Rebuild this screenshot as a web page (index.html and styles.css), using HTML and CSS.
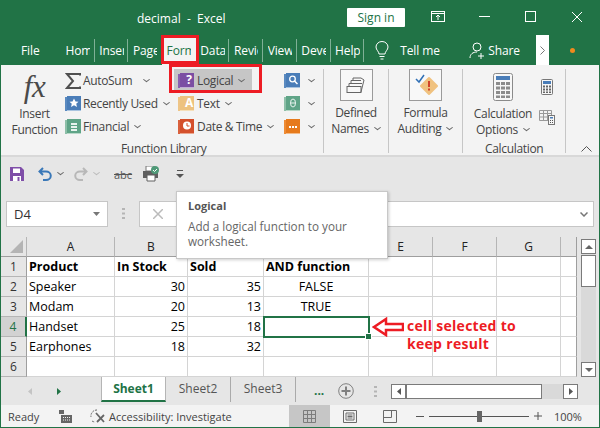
FILE: index.html
```html
<!DOCTYPE html>
<html lang="en">
<head>
<meta charset="utf-8">
<title>decimal - Excel</title>
<link rel="stylesheet" href="styles.css">
</head>
<body>
<div class="app">
  <header class="titlebar">
    <div class="doc-title">decimal&nbsp; -&nbsp; Excel</div>
    <button class="signin">Sign in</button>
    <svg class="win w-display" width="14" height="11" viewBox="0 0 14 11" fill="none" stroke="#fff"><rect x="0.5" y="0.5" width="13" height="10"/><path d="M0 2.5H14M7 9V4M5 6l2-2 2 2"/></svg>
    <svg class="win w-min" width="11" height="11" viewBox="0 0 11 11" stroke="#fff"><path d="M0 5.5H11"/></svg>
    <svg class="win w-max" width="11" height="11" viewBox="0 0 11 11" fill="none" stroke="#fff"><rect x="0.5" y="0.5" width="10" height="10"/></svg>
    <svg class="win w-close" width="12" height="12" viewBox="0 0 12 12" stroke="#fff"><path d="M1 1L11 11M11 1L1 11"/></svg>
  </header>
  <nav class="tabs">
    <span class="file-tab">File</span>
    <span class="tab"><span class="tab-t">Hom</span></span>
    <span class="tab"><span class="tab-t">Inser</span></span>
    <span class="tab"><span class="tab-t">Page</span></span>
    <span class="tab active"><span class="tab-t">Form</span></span>
    <span class="tab"><span class="tab-t">Data</span></span>
    <span class="tab"><span class="tab-t">Revie</span></span>
    <span class="tab"><span class="tab-t">View</span></span>
    <span class="tab"><span class="tab-t">Deve</span></span>
    <span class="tab"><span class="tab-t">Help</span></span>
    <svg class="bulb" width="14" height="19" viewBox="0 0 14 19" fill="none" stroke="#fff"><path d="M4 13c0-2.500-3-4-3-7a6 5.500 0 0 1 12 0c0 3-3 4.500-3 7zM4.500 15.500h5M5.500 18h3"/></svg>
    <span class="tell">Tell me</span>
    <svg class="person" width="16" height="17" viewBox="0 0 16 17" fill="none" stroke="#fff"><circle cx="8" cy="5" r="4"/><path d="M1 16c0-4 3-6 7-6M12 11v6M9 14h6"/></svg>
    <span class="share">Share</span>
    <span class="more">
      <svg width="5" height="9" viewBox="0 0 5 9" fill="none" stroke="#777"><path d="M0.500 0.500l4 4-4 4"/></svg>
    </span>
    <span class="dot"></span>
  </nav>
  <section class="ribbon">
    <div class="group g-lib">
      <div class="group-body lib-body">
        <div class="big-btn fx-btn">
          <span class="fx">fx</span>
          <span class="big-label">Insert<br>Function</span>
        </div>
        <div class="col col-1">
          <div class="rb"><svg class="ic" width="16" height="16" viewBox="0 0 16 16" fill="none" stroke="#505050" stroke-width="2"><path d="M15 2.500V1H2l6 7-6 7h13v-1.500"/></svg><span>AutoSum</span><i class="car car-wide"></i></div>
          <div class="rb"><svg class="ic" width="16" height="16" viewBox="0 0 16 16"><path d="M0 1h2v14H0z" fill="#5a8ac0"/><path d="M2 0h14v14H2z" fill="#4a7db8"/><path d="M2 14h14v1H2z" fill="#a9c4e0"/><path d="M9 2.500l1.500 3 3 .3-2.300 2 .8 3.200L9 9.300 6 11l.8-3.200-2.300-2 3-.3z" fill="#fff"/></svg><span>Recently Used</span><i class="car"></i></div>
          <div class="rb"><svg class="ic" width="16" height="16" viewBox="0 0 16 16"><path d="M0 1h2v14H0z" fill="#8dbfa8"/><path d="M2 0h14v14H2z" fill="#5fa487"/><path d="M2 14h14v1H2z" fill="#b8d8c8"/><path d="M6 4h6v2H6zM6 7h6v2H6zM6 10h6v2H6z" fill="#e8f3ee"/></svg><span>Financial</span><i class="car"></i></div>
        </div>
        <div class="col col-2">
          <div class="rb hot"><svg class="ic" width="16" height="16" viewBox="0 0 16 16"><path d="M0 1h2v14H0z" fill="#8a5fb0"/><path d="M2 0h14v14H2z" fill="#7b4ea3"/><path d="M2 14h14v1H2z" fill="#c3add6"/></svg><span class="q">?</span><span>Logical</span><i class="car"></i></div>
          <div class="rb"><svg class="ic" width="16" height="16" viewBox="0 0 16 16"><path d="M0 1h2v14H0z" fill="#eec587"/><path d="M2 0h14v14H2z" fill="#edc27f"/><path d="M2 14h14v1H2z" fill="#f5dfb9"/></svg><span class="a">A</span><span>Text</span><i class="car"></i></div>
          <div class="rb"><svg class="ic" width="16" height="16" viewBox="0 0 16 16"><path d="M0 1h2v14H0z" fill="#d9603c"/><path d="M2 0h14v14H2z" fill="#d4502c"/><path d="M2 14h14v1H2z" fill="#eba78f"/><circle cx="9" cy="6.500" r="4" fill="#fff"/><path d="M9 4v3h2.500" fill="none" stroke="#d4502c"/></svg><span>Date &amp; Time</span><i class="car"></i></div>
        </div>
        <div class="col col-3">
          <div class="rb"><svg class="ic" width="16" height="16" viewBox="0 0 16 16"><path d="M0 1h2v14H0z" fill="#5a8ac0"/><path d="M2 0h14v14H2z" fill="#4a7db8"/><path d="M2 14h14v1H2z" fill="#a9c4e0"/><circle cx="8.500" cy="6" r="2.800" fill="none" stroke="#fff" stroke-width="1.300"/><path d="M10.500 8l3 3" stroke="#fff" stroke-width="1.500"/></svg><i class="car"></i></div>
          <div class="rb"><svg class="ic" width="16" height="16" viewBox="0 0 16 16"><path d="M0 1h2v14H0z" fill="#8dbfa8"/><path d="M2 0h14v14H2z" fill="#5fa487"/><path d="M2 14h14v1H2z" fill="#b8d8c8"/><ellipse cx="9" cy="7" rx="2.500" ry="4" fill="none" stroke="#e8f3ee"/><path d="M6.500 7h5" stroke="#e8f3ee"/></svg><i class="car"></i></div>
          <div class="rb"><svg class="ic" width="16" height="16" viewBox="0 0 16 16"><path d="M0 1h2v14H0z" fill="#ee8b34"/><path d="M2 0h14v14H2z" fill="#e67a1c"/><path d="M2 14h14v1H2z" fill="#f3bb89"/><path d="M5 7h2v2H5zM8 7h2v2H8zM11 7h2v2h-2z" fill="#fff"/></svg><i class="car"></i></div>
        </div>
      </div>
      <div class="group-label lib-label">Function Library</div>
    </div>
    <div class="group g-names">
      <div class="icon-box"><svg width="20" height="20" viewBox="0 0 20 20" fill="none" stroke="#666"><rect x="1" y="11.500" width="14" height="6"/><path d="M3 11V8.500h13M5 8V5.500h10M7 5V3h8l3 2-3 12"/></svg></div>
      <div class="big-label">Defined<br>Names<i class="car"></i></div>
    </div>
    <div class="group g-audit">
      <div class="icon-box"><svg width="24" height="22" viewBox="0 0 24 22"><path d="M2 5l3 3 5-7" fill="none" stroke="#2f6fb5" stroke-width="1.500"/><path d="M15 4l8 8-8 8-8-8z" fill="#f0c27f" stroke="#f0c27f" stroke-linejoin="round" stroke-width="2"/><path d="M14 7h2v6h-2zM14 14.500h2v2h-2z" fill="#d1432a"/></svg></div>
      <div class="big-label">Formula<br>Auditing<i class="car"></i></div>
    </div>
    <div class="group g-calc">
      <div class="calc-body">
        <div class="calc-big">
          <svg width="20" height="28" viewBox="0 0 20 28"><rect x="0.500" y="0.500" width="19" height="27" rx="2" fill="#f7f7f7" stroke="#8a8a8a"/><rect x="3" y="3" width="14" height="4" fill="#4a7db8"/><path d="M3 9h4v3H3zM8 9h4v3H8zM13 9h4v3h-4zM3 13.500h4v3H3zM8 13.500h4v3H8zM13 13.500h4v3h-4zM3 18h4v3H3zM8 18h4v3H8zM13 18h4v3h-4zM3 22.500h4v2.500H3zM8 22.500h4v2.500H8zM13 22.500h4v2.500h-4z" fill="#8c8c8c"/></svg>
          <div class="big-label">Calculation<br>Options<i class="car"></i></div>
        </div>
        <div class="calc-small">
          <svg width="12" height="16" viewBox="0 0 12 16"><rect x="0.500" y="0.500" width="11" height="15" rx="1" fill="#f7f7f7" stroke="#777"/><rect x="2" y="2" width="8" height="3" fill="#4a7db8"/><path d="M2 6.500h2v2H2zM5 6.500h2v2H5zM8 6.500h2v2H8zM2 9.500h2v2H2zM5 9.500h2v2H5zM8 9.500h2v2H8zM2 12.500h2v1.500H2zM5 12.500h2v1.500H5zM8 12.500h2v1.500H8z" fill="#666"/></svg>
          <svg width="16" height="15" viewBox="0 0 16 15"><path d="M0.500 0.500h12v10h-12zM4.500 0.500v10M8.500 0.500v10M0.500 3.500h12M0.500 7h12" fill="none" stroke="#999"/><rect x="9.500" y="5.500" width="6" height="9" fill="#f7f7f7" stroke="#777"/><rect x="11" y="7" width="3" height="1.500" fill="#4a7db8"/><path d="M11 10h1v1h-1zM13 10h1v1h-1zM11 12h1v1h-1zM13 12h1v1h-1z" fill="#555"/></svg>
        </div>
      </div>
      <div class="group-label calc-label">Calculation</div>
    </div>
    <div class="collapse">
      <svg width="11" height="6" viewBox="0 0 11 6" fill="none" stroke="#555"><path d="M0.500 5.500l5-5 5 5"/></svg>
    </div>
  </section>
  <section class="qat">
    <svg class="q-save" width="14" height="14" viewBox="0 0 14 14"><path d="M0 0h11l3 3v11H0z" fill="#7f4ea8"/><path d="M3 1.500h7V6H3z" fill="#fff"/><path d="M3 9h8v5H3z" fill="#fff"/><path d="M7.500 10h2v4h-2z" fill="#7f4ea8"/></svg>
    <svg class="q-undo" width="14" height="14" viewBox="0 0 14 14" fill="none" stroke="#3a78b8" stroke-width="2"><path d="M5 1L1.500 4.500 5 8M2 4.500h6a4.500 4 0 0 1 0 8.500H5"/></svg>
    <i class="car q-car1"></i>
    <svg class="q-redo" width="14" height="14" viewBox="0 0 14 14" fill="none" stroke="#b8b8b8" stroke-width="2"><path d="M9 1l3.500 3.500L9 8M12 4.500H6a4.500 4 0 0 0 0 8.500h3"/></svg>
    <i class="car car-off q-car2"></i>
    <span class="abc">abc</span>
    <svg class="q-print" width="17" height="16" viewBox="0 0 17 16"><rect x="3" y="0" width="8" height="5" fill="#fff" stroke="#777"/><path d="M0 5h15v7H0z" fill="#606060"/><path d="M4 9h8v6H4z" fill="#fff" stroke="#606060"/><circle cx="12" cy="4" r="4" fill="#4f9a78"/><path d="M10 4l1.500 1.500L14 3" fill="none" stroke="#fff"/></svg>
    <svg class="q-custom" width="8" height="9" viewBox="0 0 8 9" fill="#555"><path d="M1 0h6v1H1zM0 4h8L4 8z"/></svg>
  </section>
  <section class="fbar">
    <div class="namebox"><span>D4</span><svg width="7" height="4" viewBox="0 0 7 4" fill="#777"><path d="M0 0h7L3.500 4z"/></svg></div>
    <svg class="grip" width="3" height="11" viewBox="0 0 3 11" fill="#b5b5b5"><path d="M0 0h3v2H0zM0 4.500h3v2H0zM0 9h3v2H0z"/></svg>
    <div class="finput">
      <svg width="10" height="10" viewBox="0 0 10 10" stroke="#bbb" stroke-width="1.500"><path d="M0 0L10 10M10 0L0 10"/></svg>
      <svg class="f-chev" width="8" height="5" viewBox="0 0 8 5" fill="none" stroke="#777" stroke-width="1.500"><path d="M0.500 0.500L4 4l3.500-3.500"/></svg>
    </div>
  </section>
  <section class="sheet-area">
    <div class="grid">
      <div class="ch corner"><svg width="13" height="13" viewBox="0 0 13 13" fill="#b4b4b4"><path d="M13 0v13H0z"/></svg></div>
      <div class="ch">A</div><div class="ch">B</div><div class="ch">C</div><div class="ch">D</div><div class="ch">E</div><div class="ch">F</div><div class="ch">G</div><div class="ch ch-end"></div>

      <div class="rh">1</div><div class="c b">Product</div><div class="c b">In Stock</div><div class="c b">Sold</div><div class="c b">AND function</div><div class="c"></div><div class="c"></div><div class="c"></div><div class="c"></div>
      <div class="rh">2</div><div class="c">Speaker</div><div class="c n">30</div><div class="c n">35</div><div class="c m">FALSE</div><div class="c"></div><div class="c"></div><div class="c"></div><div class="c"></div>
      <div class="rh">3</div><div class="c">Modam</div><div class="c n">20</div><div class="c n">13</div><div class="c m">TRUE</div><div class="c"></div><div class="c"></div><div class="c"></div><div class="c"></div>
      <div class="rh sel">4</div><div class="c">Handset</div><div class="c n">25</div><div class="c n">18</div><div class="c cur"><span class="handle"></span></div><div class="c"></div><div class="c"></div><div class="c"></div><div class="c"></div>
      <div class="rh">5</div><div class="c">Earphones</div><div class="c n">18</div><div class="c n">32</div><div class="c"></div><div class="c"></div><div class="c"></div><div class="c"></div><div class="c"></div>
      <div class="rh">6</div><div class="c"></div><div class="c"></div><div class="c"></div><div class="c"></div><div class="c"></div><div class="c"></div><div class="c"></div><div class="c"></div>
    </div>
    <div class="vscroll">
      <div class="sb-btn"><svg width="8" height="4" viewBox="0 0 8 4" fill="#666"><path d="M4 0l4 4H0z"/></svg></div>
      <div class="sb-thumb"></div>
      <div class="sb-btn sb-down"><svg width="8" height="4" viewBox="0 0 8 4" fill="#666"><path d="M0 0h8L4 4z"/></svg></div>
    </div>
  </section>
  <section class="sheetbar">
    <svg class="nav-l" width="4" height="7" viewBox="0 0 4 7" fill="#c4c4c4"><path d="M4 0v7L0 3.500z"/></svg>
    <svg class="nav-r" width="4" height="7" viewBox="0 0 4 7" fill="#217346"><path d="M0 0v7l4-3.500z"/></svg>
    <div class="stab on">Sheet1</div>
    <div class="stab">Sheet2</div>
    <div class="stab">Sheet3</div>
    <span class="ell">...</span>
    <svg class="plus" width="16" height="16" viewBox="0 0 16 16" fill="none" stroke="#808080"><circle cx="8" cy="8" r="7.300"/><path d="M8 3.500v9M3.500 8h9" stroke-width="2"/></svg>
    <svg class="grip grip2" width="3" height="11" viewBox="0 0 3 11" fill="#b5b5b5"><path d="M0 0h3v2H0zM0 4.500h3v2H0zM0 9h3v2H0z"/></svg>
    <div class="hscroll">
      <div class="hb"><svg width="4" height="7" viewBox="0 0 4 7" fill="#555"><path d="M4 0v7L0 3.500z"/></svg></div>
      <div class="hthumb"></div>
      <div class="hb"><svg width="4" height="7" viewBox="0 0 4 7" fill="#555"><path d="M0 0v7l4-3.500z"/></svg></div>
    </div>
  </section>
  <footer class="status">
    <span class="ready">Ready</span>
    <svg class="st-macro" width="13" height="13" viewBox="0 0 13 13" fill="#666"><path d="M0 0h5v4H0zM2 5h11v8H2z"/><path d="M4 7h1v1H4zM6 7h1v1H6zM8 7h1v1H8zM10 7h1v1h-1zM4 9.500h1v1H4zM6 9.500h1v1H6zM8 9.500h1v1H8zM10 9.500h1v1h-1z" fill="#f3f3f3"/></svg>
    <svg class="st-acc" width="17" height="15" viewBox="0 0 17 15" fill="none" stroke="#666"><path d="M8 1a6 6 0 0 0-6 7M3 12a6 6 0 0 0 3 1" stroke-dasharray="2 1"/><path d="M7 4l8 9M15 6l-7 7" stroke-width="1.800"/></svg>
    <span class="acc">Accessibility: Investigate</span>
    <div class="view-on"><svg width="13" height="13" viewBox="0 0 13 13" fill="none" stroke="#7c7c7c"><path d="M.5.500h12v12H.5zM4.500.500v12M8.500.500v12M.5 4.500h12M.5 8.500h12"/></svg></div>
    <svg class="v-layout" width="14" height="13" viewBox="0 0 14 13" fill="none" stroke="#6a6a6a"><path d="M.5.500h13v12H.5zM3 3h8v7H3zM4.500 5h5M4.500 6.500h5M4.500 8h5"/></svg>
    <svg class="v-break" width="14" height="13" viewBox="0 0 14 13" fill="none" stroke="#6a6a6a"><path d="M.5.500h13v12H.5zM.5 7.500h8V.5"/></svg>
    <svg class="z-minus" width="8" height="1" viewBox="0 0 8 1" fill="#555"><path d="M0 0h8v1H0z"/></svg>
    <div class="slider"><span class="knob"></span></div>
    <svg class="z-plus" width="8" height="8" viewBox="0 0 8 8" fill="#555"><path d="M0 3.500h8v1H0zM3.500 0h1v8h-1z"/></svg>
    <span class="pct">100%</span>
  </footer>

  <div class="mark mark-tab"></div>
  <div class="mark mark-logical"></div>
  <aside class="tooltip">
    <div class="tip-title">Logical</div>
    <div class="tip-text">Add a logical function to your worksheet.</div>
  </aside>
  <div class="note">
    <svg width="32" height="20" viewBox="0 0 32 20" fill="#fff" stroke="#ed1c24" stroke-width="2.500"><path d="M2 10l12-8v5h17v6H14v5z"/></svg>
    <div class="note-text">cell selected to<br>keep result</div>
  </div>
</div>
</body>
</html>
```
FILE: styles.css
```css
* { box-sizing: border-box; }
html, body { margin: 0; padding: 0; }
body { font-family: "Open Sans", "Noto Sans", sans-serif; color: #444; }
.app { position: relative; width: 600px; height: 428px; overflow: hidden; background: #e6e6e6; border: 1px solid #217346; border-width: 0 1px 1px 1px; display: flex; flex-direction: column; }
svg { display: block; flex: none; }
i.car { display: inline-block; width: 5px; height: 5px; border: solid #666; border-width: 0 1px 1px 0; transform: scale(1, .75) rotate(45deg); margin: 0 1px 3px 6px; flex: none; }
i.car-off { border-color: #bbb; }

/* title */
.titlebar { height: 36px; background: #217346; display: flex; align-items: center; flex: none; color: #fff; }
.doc-title { width: 346px; padding-left: 136px; font-size: 12px; }
.signin { width: 58px; height: 19px; margin-top: -2px; background: #fff; color: #217346; border: 0; border-radius: 1px; font: 12px "Open Sans", sans-serif; padding: 0; }
.win { margin-top: -3px; }
.w-display { margin-left: 26px; }
.w-min { margin-left: 34px; }
.w-max { margin-left: 35px; }
.w-close { margin-left: 35px; }

/* tabs */
.tabs { height: 29px; background: #217346; display: flex; align-items: center; flex: none; color: #fff; font-size: 12px; letter-spacing: -.1px; }
.file-tab { width: 60px; padding-left: 20px; }
.tab { width: 33.700px; height: 23px; line-height: 23px; padding-left: 4.500px; white-space: nowrap; border-right: 1px solid #7fb096; }
.tab-t { display: block; width: 24.500px; overflow: hidden; }
.tab.active { height: 29px; line-height: 29px; background: #f3f3f3; color: #217346; border-right: 0; }
.bulb { margin-left: 11px; }
.tell { margin-left: 11px; width: 38px; white-space: nowrap; }
.person { margin-left: 31px; }
.share { margin-left: 3px; width: 30px; }
.more { margin-left: 18px; width: 13px; height: 30px; background: #fff; display: flex; align-items: center; justify-content: center; align-self: flex-end; }
.dot { width: 5px; height: 5px; border-radius: 50%; background: #f08a1d; margin-left: 21px; margin-top: -1px; }

/* ribbon */
.ribbon { height: 92px; flex: none; background: #f3f3f3; border-bottom: 2px solid #d8d8d8; display: flex; font-size: 12px; color: #444; letter-spacing: -.33px; }
.group { position: relative; border-right: 1px solid #c6c6c6; height: 84px; margin-top: 4px; flex: none; display: flex; flex-direction: column; align-items: center; }
.g-lib { width: 323px; }
.g-names { width: 65px; }
.g-audit { width: 74px; }
.g-calc { width: 103px; }
.group-body { flex: 1; }
.lib-body { display: flex; width: 100%; align-items: flex-start; }
.big-btn { display: flex; flex-direction: column; align-items: center; }
.fx-btn { width: 67px; }
.fx { font: italic 31px/36px "Liberation Serif", serif; color: #4a4a4a; height: 36px; }
.big-label { font-size: 12px; line-height: 16px; text-align: center; white-space: nowrap; }
.fx-btn .big-label { margin-top: 1px; }
.col { display: flex; flex-direction: column; }
.col-1 { width: 109px; margin-left: -4px; }
.col-1 .ic { margin-right: 2px; }
.col-2 { width: 106px; margin-left: 4px; }
.col-3 { width: 38px; }
.rb { height: 23px; display: flex; align-items: center; white-space: nowrap; position: relative; padding-left: 1px; }
.rb .ic { margin-right: 3px; }
.col-1 .rb .ic { margin-right: 2px; }
.rb .car { margin-left: 6px; }
.rb .car-wide { margin-left: 12px; }
.hot { background: #c6c6c6; width: 78px; margin-left: -3px; padding-left: 4px; }
.q, .a { position: absolute; left: 8px; width: 14px; text-align: center; font-weight: 700; font-size: 12px; line-height: 14px; top: 4px; color: #fff; }
.a { left: 5px; }
.group-label { position: absolute; white-space: nowrap; font-size: 12px; line-height: 16px; }
.lib-label { left: 120px; bottom: -4px; }
.icon-box { width: 33px; height: 32px; border: 1px solid #9a9a9a; display: flex; align-items: center; justify-content: center; background: #f8f8f8; }
.group > .big-label { margin-top: 4px; }
.calc-body { display: flex; width: 100%; }
.calc-big { width: 80px; display: flex; flex-direction: column; align-items: center; padding-top: 4px; }
.calc-big .big-label { margin-top: 5px; }
.calc-small { display: flex; flex-direction: column; gap: 15px; padding-top: 10px; align-items: center; width: 18px; margin-left: -5px; }
.calc-label { left: 22px; bottom: -4px; }
.collapse { flex: 1; display: flex; align-items: flex-end; justify-content: flex-end; padding: 0 7px 3px 0; }

/* qat */
.qat { height: 44px; flex: none; display: flex; align-items: center; padding-bottom: 10px; font-size: 11px; color: #555; }
.q-save { margin-left: 9px; }
.q-undo { margin-left: 14px; }
.q-car1 { margin-left: 8px; }
.q-redo { margin-left: 10px; }
.q-car2 { margin-left: 8px; }
.abc { margin-left: 14px; text-decoration: line-through; width: 17px; }
.q-print { margin-left: 12px; }
.q-custom { margin-left: 16px; }

/* formula bar */
.fbar { height: 26px; flex: none; display: flex; align-items: stretch; padding-left: 5px; }
.namebox { width: 102px; background: #fff; border: 1px solid #c6c6c6; display: flex; align-items: center; justify-content: space-between; padding: 0 7px; font-size: 13px; color: #333; }
.fbar .grip { margin: 7px 0 0 14px; }
.finput { width: 455px; margin-left: 14px; background: #fff; border: 1px solid #c6c6c6; display: flex; align-items: center; justify-content: space-between; padding: 0 5px 0 13px; }

/* sheet */
.sheet-area { flex: none; height: 150px; padding-top: 10px; display: flex; }
.grid { display: grid; grid-template-columns: 26px 88px 73px 76px 105px 64px 64px 64px 16px; grid-template-rows: repeat(7, 20px); width: 576px; height: 140px; font-size: 12.500px; color: #000; }
.ch { background: #e6e6e6; border-right: 1px solid #b5b5b5; border-bottom: 1px solid #9e9e9e; text-align: center; line-height: 20px; color: #222; font-size: 12px; }
.corner { display: flex; align-items: flex-end; justify-content: flex-end; padding: 0 3px 3px 0; }
.ch-end { border-right: 1px solid #9e9e9e; }
.rh { background: #e6e6e6; border-bottom: 1px solid #b5b5b5; border-right: 1px solid #9e9e9e; text-align: center; line-height: 19px; font-size: 12px; color: #333; }
.rh.sel { background: #d2d2d2; color: #217346; border-right: 2px solid #217346; }
.c { background: #fff; border-right: 1px solid #d4d4d4; border-bottom: 1px solid #d4d4d4; line-height: 20px; padding: 0 2px; white-space: nowrap; overflow: hidden; }
.c:nth-child(9n) { border-right: 1px solid #9e9e9e; }
.b { font-weight: 700; }
.n { text-align: right; }
.m { text-align: center; }
.cur { position: relative; overflow: visible; outline: 2px solid #217346; outline-offset: -1px; z-index: 1; }
.handle { position: absolute; right: -4px; bottom: -4px; width: 7px; height: 7px; background: #217346; border: 1px solid #fff; }
.vscroll { width: 15px; margin: 2px 0 0 4px; background: #d9d9d9; display: flex; flex-direction: column; height: 138px; }
.sb-btn { height: 15px; background: #fff; border: 1px solid #7a7a7a; display: flex; align-items: center; justify-content: center; flex: none; }
.sb-thumb { height: 32px; background: #fff; border: 1px solid #7a7a7a; margin-top: 1px; flex: none; }
.sb-down { margin-top: auto; }

/* sheet tabs */
.sheetbar { height: 28px; flex: none; display: flex; align-items: center; font-size: 12px; color: #555; }
.nav-l { margin-left: 27px; }
.nav-r { margin-left: 25px; }
.stab { width: 65px; height: 25px; text-align: center; line-height: 24px; align-self: flex-start; border-right: 1px solid #aaa; }
.nav-r + .stab { margin-left: 40px; }
.stab.on { background: #fff; color: #217346; font-weight: 700; border: 1px solid #b5b5b5; border-top: 0; border-bottom: 2px solid #217346; }
.ell { margin-left: 18px; color: #217346; font-weight: 700; width: 12px; line-height: 8px; }
.plus { margin-left: 12px; }
.sheetbar .grip2 { margin-left: 20px; }
.hscroll { width: 187px; height: 15px; margin-left: 14px; display: flex; background: #d9d9d9; }
.hb { width: 15px; background: #fff; border: 1px solid #7a7a7a; display: flex; align-items: center; justify-content: center; flex: none; }
.hthumb { width: 136px; background: #fff; border: 1px solid #7a7a7a; flex: none; margin-right: auto; }

/* status */
.status { height: 22px; flex: none; background: #f3f3f3; display: flex; align-items: center; font-size: 11px; color: #444; }
.ready { margin-left: 7px; width: 51px; }
.st-acc { margin-left: 17px; }
.acc { margin-left: 3px; width: 180px; white-space: nowrap; }
.view-on { width: 41px; height: 22px; background: #c6c6c6; display: flex; align-items: center; justify-content: flex-end; padding-right: 14px; }
.v-layout { margin-left: 13px; }
.v-break { margin-left: 26px; }
.z-minus { margin-left: 19px; }
.slider { width: 100px; height: 1px; background: #555; margin-left: 5px; position: relative; }
.knob { position: absolute; left: 48px; top: -5px; width: 5px; height: 11px; background: #666; }
.z-plus { margin-left: 5px; }
.pct { margin-left: 12px; font-size: 11px; }

/* overlays */
.mark { position: absolute; border: 3px solid #ed1c24; }
.mark-tab { left: 160px; top: 35px; width: 38px; height: 29px; }
.mark-logical { left: 168px; top: 64px; width: 93px; height: 29px; }
.tooltip { position: absolute; left: 175px; top: 191px; width: 212px; height: 68px; background: #fff; border: 1px solid #c8c8c8; box-shadow: 1px 1px 3px rgba(0,0,0,.2); padding: 6px 11px; font-size: 11.700px; line-height: 15px; color: #666; z-index: 3; }
.tip-title { font-size: 11px; font-weight: 700; color: #555; margin-bottom: 6px; }
.note { position: absolute; left: 371px; top: 317px; display: flex; align-items: flex-start; gap: 3px; z-index: 2; }
.note-text { font-weight: 700; font-size: 14px; letter-spacing: .3px; line-height: 18px; color: #ed1c24; white-space: nowrap; }
```
